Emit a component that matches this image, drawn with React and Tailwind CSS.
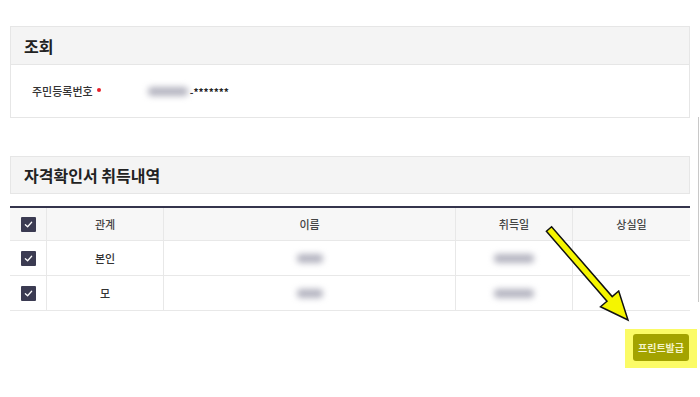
import React from "react";

const Check = () => (
  <span className="inline-flex h-[15px] w-[15px] items-center justify-center rounded-[1px] bg-[#3b3b52]">
    <svg width="9" height="9" viewBox="0 0 10 10" fill="none">
      <path d="M1.5 5.2 L4 7.5 L8.5 2.5" stroke="#ffffff" strokeWidth="1.4" strokeLinecap="round" strokeLinejoin="round" />
    </svg>
  </span>
);

const Blur = ({ w }) => (
  <span className={`inline-block h-[9px] rounded-sm bg-[#b4b4c0] blur-[3px] ${w}`} />
);

export default function App() {
  const rows = [
    { rel: "본인", nameW: "w-[26px]", dateW: "w-[40px]" },
    { rel: "모", nameW: "w-[26px]", dateW: "w-[40px]" },
  ];
  return (
    <div
      className="relative h-[397px] w-[700px] overflow-hidden bg-white px-[10px] pt-[26px] text-[#333]"
      style={{ fontFamily: '"Noto Sans CJK KR", "Noto Sans", sans-serif' }}
    >
      {/* 조회 panel */}
      <div className="border border-[#e6e6e6]">
        <div className="flex h-[38px] items-center border-b border-[#e6e6e6] bg-[#f4f4f4] pl-[13px] text-[16px] font-bold text-[#222]">
          조회
        </div>
        <div className="flex h-[52px] items-center pl-[21px] text-[11px] font-medium">
          <span className="text-[#333]">주민등록번호</span>
          <span className="ml-[4px] mb-[3px] h-[4px] w-[4px] rounded-full bg-[#e8202a]" />
          <span className="ml-[47px] flex items-center">
            <Blur w="w-[40px]" />
            <span className="ml-[2px] text-[10px] font-bold text-[#222]">-*******</span>
          </span>
        </div>
      </div>

      {/* 자격확인서 취득내역 */}
      <div className="mt-[38px] flex h-[38px] items-center border border-[#e6e6e6] bg-[#f4f4f4] pl-[13px] text-[16px] font-bold text-[#222]">
        자격확인서 취득내역
      </div>

      <div className="mt-[12px] border-t-2 border-[#34344c]">
        <div className="grid h-[33px] grid-cols-[37px_117px_292px_117px_1fr] border-b border-[#e8e8e8] bg-[#f7f7f7] text-[11px] font-medium text-[#444]">
          <div className="flex items-center justify-center border-r border-[#e8e8e8]"><Check /></div>
          <div className="flex items-center justify-center border-r border-[#e8e8e8]">관계</div>
          <div className="flex items-center justify-center border-r border-[#e8e8e8]">이름</div>
          <div className="flex items-center justify-center border-r border-[#e8e8e8]">취득일</div>
          <div className="flex items-center justify-center">상실일</div>
        </div>
        {rows.map((r, i) => (
          <div
            key={i}
            className="grid h-[35px] grid-cols-[37px_117px_292px_117px_1fr] border-b border-[#e8e8e8] text-[11px] font-medium text-[#333]"
          >
            <div className="flex items-center justify-center border-r border-[#e8e8e8]"><Check /></div>
            <div className="flex items-center justify-center border-r border-[#e8e8e8]">{r.rel}</div>
            <div className="flex items-center justify-center border-r border-[#e8e8e8]"><Blur w={r.nameW} /></div>
            <div className="flex items-center justify-center border-r border-[#e8e8e8]"><Blur w={r.dateW} /></div>
            <div />
          </div>
        ))}
      </div>

      <div className="mt-[18px] flex justify-end">
        <div className="mr-[-7px] bg-[#fbfb66] pb-[7px] pl-[8px] pr-[8px] pt-[5px]">
          <div className="flex h-[27px] w-[56px] items-center justify-center rounded-[3px] bg-[#a3a300] text-[10px] font-bold text-[#f4f4c8]">
            프린트발급
          </div>
        </div>
      </div>

      {/* scrollbar edge */}
      <div className="absolute left-[698px] top-[117px] h-[185px] w-px bg-[#c8c8c8]" />

      {/* arrow overlay */}
      <svg className="pointer-events-none absolute left-0 top-0" width="700" height="397">
        <polygon
          points="546.4,231.3 607,301.2 600.5,306.8 628,320 618.7,291 612.2,296.6 551.6,226.7"
          fill="#f5f500"
          stroke="#111"
          strokeWidth="1.5"
          strokeLinejoin="miter"
        />
      </svg>
    </div>
  );
}
